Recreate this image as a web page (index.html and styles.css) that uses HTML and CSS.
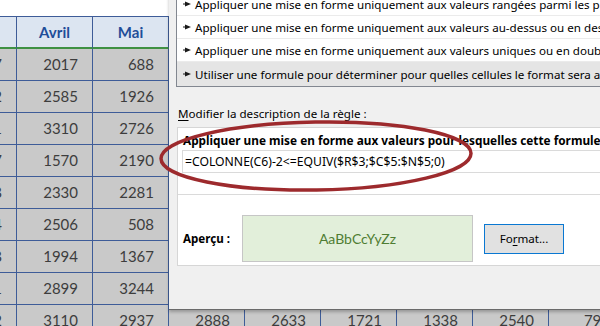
FILE: index.html
```html
<!DOCTYPE html>
<html>
<head>
  <meta charset="UTF-8">
  <link rel="stylesheet" href="styles.css">
  <title>Nouvelle règle de mise en forme</title>
</head>
<body>
  <div class="sheet">
    <div class="row head">
      <div>Mars</div><div>Avril</div><div>Mai</div><div>Juin</div><div>Juillet</div><div>Août</div><div>Sept.</div><div>Oct.</div><div>Nov.</div>
    </div>
    <div class="row">
      <div>1937</div><div>2017</div><div>688</div><div>1463</div><div>2210</div><div>905</div><div>3120</div><div>1845</div><div>2398</div>
    </div>
    <div class="row">
      <div>3012</div><div>2585</div><div>1926</div><div>2741</div><div>1189</div><div>2056</div><div>1532</div><div>2967</div><div>1204</div>
    </div>
    <div class="row">
      <div>2771</div><div>3310</div><div>2726</div><div>1318</div><div>2604</div><div>3175</div><div>2089</div><div>1476</div><div>2831</div>
    </div>
    <div class="row">
      <div>1457</div><div>1570</div><div>2190</div><div>3046</div><div>1752</div><div>2418</div><div>2963</div><div>1107</div><div>1690</div>
    </div>
    <div class="row">
      <div>2568</div><div>2330</div><div>2281</div><div>1893</div><div>3207</div><div>1364</div><div>2545</div><div>2712</div><div>3058</div>
    </div>
    <div class="row">
      <div>1744</div><div>2506</div><div>508</div><div>2675</div><div>1936</div><div>2820</div><div>1281</div><div>3394</div><div>2147</div>
    </div>
    <div class="row">
      <div>3088</div><div>1994</div><div>1367</div><div>2139</div><div>2481</div><div>1705</div><div>3012</div><div>2236</div><div>1583</div>
    </div>
    <div class="row">
      <div>2151</div><div>2899</div><div>3244</div><div>1520</div><div>2378</div><div>2914</div><div>1846</div><div>2603</div><div>3172</div>
    </div>
    <div class="row">
      <div>2402</div><div>3110</div><div>2937</div><div>2888</div><div>2633</div><div>1721</div><div>1338</div><div>2540</div><div>796</div>
    </div>
  </div>

  <div class="dialog">
    <ul class="rules">
      <li><svg class="arrow" width="8" height="6" viewBox="0 0 8 6"><polygon points="0,2.6 2,2.6 2,0.4 8,3 2,5.6 2,3.4 0,3.4"/></svg>Appliquer une mise en forme uniquement aux valeurs rangées parmi les premières ou les dernières valeurs</li>
      <li><svg class="arrow" width="8" height="6" viewBox="0 0 8 6"><polygon points="0,2.6 2,2.6 2,0.4 8,3 2,5.6 2,3.4 0,3.4"/></svg>Appliquer une mise en forme uniquement aux valeurs au-dessus ou en dessous de la moyenne</li>
      <li><svg class="arrow" width="8" height="6" viewBox="0 0 8 6"><polygon points="0,2.6 2,2.6 2,0.4 8,3 2,5.6 2,3.4 0,3.4"/></svg>Appliquer une mise en forme uniquement aux valeurs uniques ou en double</li>
      <li class="sel"><svg class="arrow" width="8" height="6" viewBox="0 0 8 6"><polygon points="0,2.6 2,2.6 2,0.4 8,3 2,5.6 2,3.4 0,3.4"/></svg>Utiliser une formule pour déterminer pour quelles cellules le format sera appliqué</li>
    </ul>

    <div class="caption"><u>M</u>odifier la description de la règle :</div>

    <div class="panel">
      <div class="title">Appliquer une mise en forme aux valeurs pour lesquelles cette formule est vraie :</div>
      <div class="formula">=COLONNE(C6)-2&lt;=EQUIV($R$3;$C$5:$N$5;0)</div>
      <div class="divider"></div>
      <div class="preview-row">
        <div class="preview-label">Aperçu :</div>
        <div class="preview">AaBbCcYyZz</div>
        <div class="button">Fo<u>r</u>mat...</div>
      </div>
    </div>
  </div>

  <svg class="mark" width="600" height="326" viewBox="0 0 600 326">
    <ellipse cx="316" cy="156" rx="155" ry="34" transform="rotate(-1 316 156)" />
  </svg>
</body>
</html>
```

FILE: styles.css
```css
body {
	margin: 0;
	width: 600px;
	height: 326px;
	overflow: hidden;
	position: relative;
	background: #ffffff;
}

/* feuille de calcul */
.sheet {
	margin-left: -59px;
	padding-top: 16px;
	font-family: Lato, "Liberation Sans", sans-serif;
	font-size: 15px;
	color: #3d3d3d;
}
.row {
	display: grid;
	grid-template-columns: repeat(9, 76px);
	height: 32px;
}
.row div {
	box-sizing: border-box;
	border-right: 1px solid #3e5c98;
	border-bottom: 1px solid #3e5c98;
	background: #c9c9c9;
	text-align: right;
	padding-right: 14px;
	line-height: 31px;
	white-space: nowrap;
}
.row.head {
	height: 33px;
}
.row.head div {
	background: #dce5f1;
	color: #1f4e99;
	font-weight: bold;
	text-align: center;
	padding-right: 0;
	border-top: 1px solid #3e5c98;
	border-bottom: 2px solid #3f9144;
	line-height: 30px;
}

/* fenêtre de dialogue */
.dialog {
	position: absolute;
	left: 169px;
	top: -40px;
	width: 520px;
	height: 350px;
	box-sizing: border-box;
	padding: 32px 0 0 7px;
	background: #f0f0f0;
	border-bottom: 1px solid #6a6a6a;
	box-shadow: 0 2px 3px rgba(0, 0, 0, 0.25);
	font-family: "Noto Sans", "Open Sans", sans-serif;
	font-size: 11.6px;
	color: #000000;
}
.rules {
	list-style: none;
	margin: 0;
	padding: 0;
	background: #ffffff;
	border: 1px solid #828790;
}
.rules li {
	display: flex;
	align-items: center;
	gap: 4px;
	height: 22px;
	padding-left: 6px;
	border-bottom: 1px solid #ebebeb;
	white-space: nowrap;
}
.rules li.sel {
	height: 24px;
	background: #e5e5e5;
	border-bottom: none;
}
.arrow {
	flex: none;
	fill: #1a1a1a;
}
.caption {
	margin: 18px 0 0 2px;
	line-height: 17px;
	white-space: nowrap;
}
.caption u, .button u {
	text-decoration-thickness: 1px;
	text-underline-offset: 2px;
}
.panel {
	margin: 5px 0 0 1px;
	padding: 4px 0 3px 5px;
	background: #ffffff;
	border: 1px solid #d6d6d6;
	border-right: none;
}
.title {
	font-size: 11.8px;
	font-weight: bold;
	line-height: 17px;
	white-space: nowrap;
}
.formula {
	margin: 1px 0 0 -1px;
	height: 21px;
	line-height: 21px;
	padding-left: 2px;
	font-size: 12.2px;
	border: 1px solid #dadada;
	border-right: none;
	white-space: nowrap;
}
.divider {
	margin: 21px 0 0 -5px;
	border-top: 1px solid #dadada;
}
.preview-row {
	display: flex;
	align-items: center;
	margin-top: 20px;
}
.preview-label {
	width: 59px;
	font-weight: bold;
}
.preview {
	width: 229px;
	height: 45px;
	line-height: 45px;
	text-align: center;
	background: #e2efda;
	border: 1px solid #c6c6c6;
	color: #4f7d33;
	font-family: Lato, "Liberation Sans", sans-serif;
	font-size: 14px;
}
.button {
	margin-left: 11px;
	width: 78px;
	height: 28px;
	line-height: 28px;
	text-align: center;
	background: #e1e1e1;
	border: 1px solid #0a78d2;
}

/* ellipse rouge */
.mark {
	position: absolute;
	left: 0;
	top: 0;
	pointer-events: none;
}
.mark ellipse {
	fill: none;
	stroke: #9d2a2d;
	stroke-width: 3.5;
}
```
